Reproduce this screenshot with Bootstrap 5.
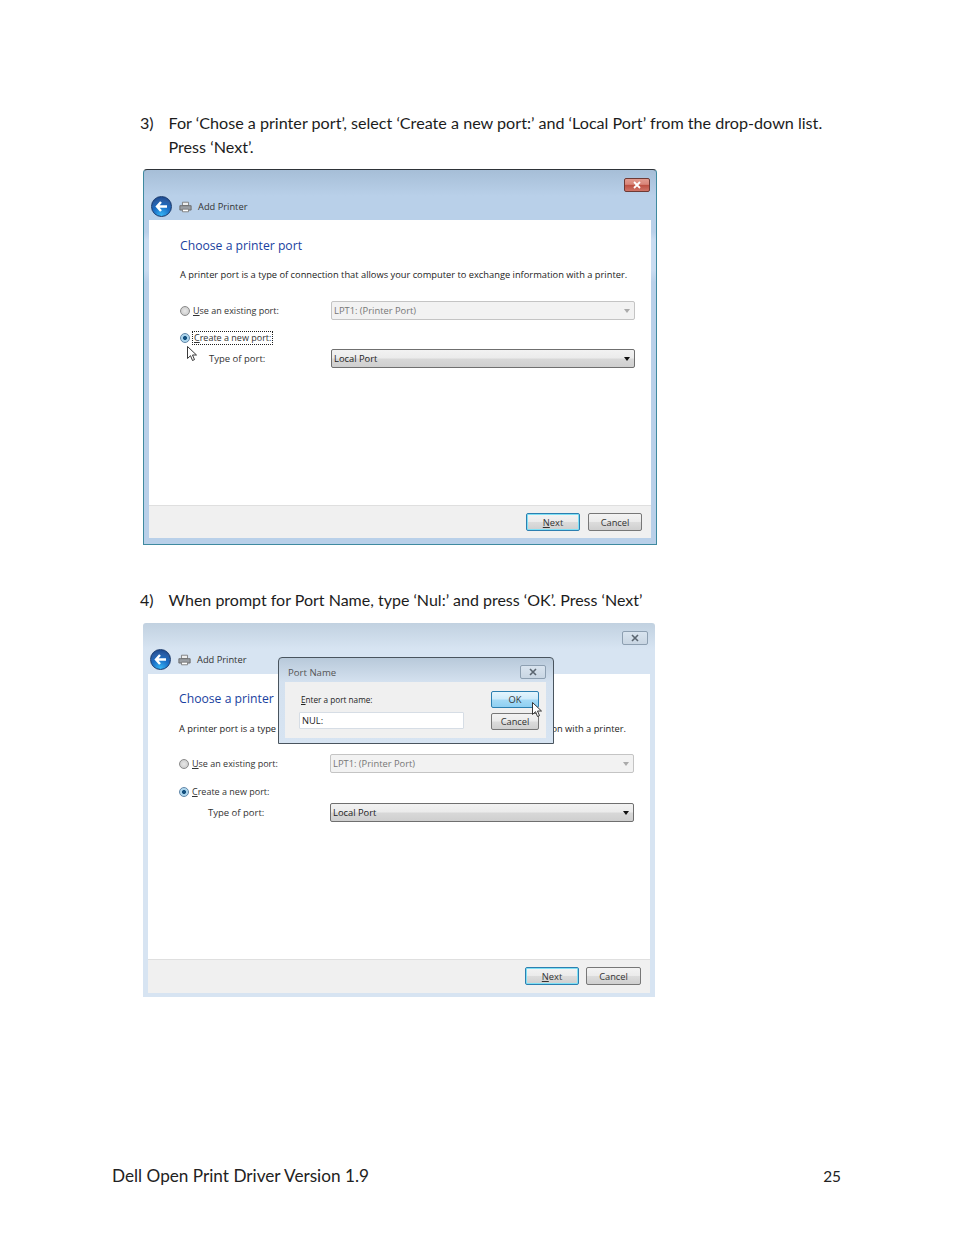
<!DOCTYPE html>
<html lang="en">
<head>
<meta charset="utf-8">
<title>Dell Open Print Driver</title>
<link href="https://cdn.jsdelivr.net/npm/bootstrap@5.3.0/dist/css/bootstrap.min.css" rel="stylesheet">
<style>
html,body{margin:0;background:#fff}
.docpage{width:954px;height:1235px;padding:111px 113px 47px 0;font-family:Lato,"Liberation Sans",sans-serif;font-size:16.15px;line-height:24px;color:#1c1c1c}
.step{margin-left:140px}
.stepb{margin-top:43px;font-size:16px}
.stepnum{width:28.5px;flex:none}
.wshot{position:relative;margin-left:143px;width:514px;height:376px;margin-top:10px;padding:0 5px 6px;background:linear-gradient(180deg,#a6bed7 0,#b9d0e9 26px,#b9d0e9 62px,#c9dcf1 70px,#c9dcf1 100px,#b9d0e9 112px);border:1px solid #3f8aa0;border-top:1px solid #2e3338;border-radius:4px 4px 0 0;font-family:"Open Sans","Liberation Sans",sans-serif;font-size:9.3px;line-height:16px;color:#222}
.wshot.faded{width:512px;height:374px;padding:0 5px 4px;margin-left:143px;background:linear-gradient(180deg,#c1d1e0 0,#d7e4f2 26px);border:0;margin-top:11px;border-radius:3px 3px 0 0}
.tbar{height:50px;position:relative}
.faded .tbar{height:51px}
.xbtn{position:absolute;display:flex;align-items:center;justify-content:center;width:26px;height:14px;border-radius:2px}
.xred{right:1px;top:8px;background:linear-gradient(180deg,#e29a8e 0,#d98679 45%,#bd4f41 50%,#cf7468 100%);border:1px solid #6e3a35}
.xplain{right:2px;top:8px;background:linear-gradient(180deg,#d9e4ef,#c9d6e3);border:1px solid #8d9fb1}
.backb{width:21px;height:21px;border-radius:50%;background:radial-gradient(circle at 50% 95%,#35b4f5 0,#1a6cc4 45%,#2a5ea6 70%,#123f86 100%);border:1px solid #17386c;margin-left:2px;flex:none}
.tbrow{position:absolute;left:0;top:26px;display:flex;align-items:center;font-size:9.3px;color:#333}
.tbrow .pico{margin-left:7px}
.tbrow .ttxt{margin-left:6px}
.pane{background:#fff;height:285px;padding:16px 0 0 31px}
.faded .pane{padding-top:15px}
.phead{font-size:12.2px;line-height:20px;color:#1a3fa0}
.pdesc{margin-top:11px;white-space:nowrap}
.faded .pdesc{margin-top:12px;width:447px}
.frow{display:flex;align-items:center;font-size:9px}
.r1{margin-top:18px;height:19px}
.faded .r1{margin-top:17px}
.r2{margin-top:9px;height:18px}
.faded .r2{margin-top:10px}
.r3{margin-top:2px;height:19px}
.flabel{width:151px;flex:none;display:flex;align-items:center;gap:3px;white-space:nowrap;color:#333}
.r3 .flabel{padding-left:29px;font-size:9.5px}
.rdot{width:10px;height:10px;border-radius:50%;flex:none;border:1px solid #8a8a8a;background:radial-gradient(circle,#e8e8e8 0,#c4c4c4 100%)}
.rdot.on{border-color:#5f86a8;background:radial-gradient(circle,#14507f 0,#14507f 32%,#a8d4ee 40%,#bfdcec 100%)}
.focusbox{outline:1px dotted #222;padding:0 1px;line-height:12px}
.wsel{width:304px;height:19px;display:flex;align-items:center;justify-content:space-between;padding:0 4px 0 2px;border-radius:2px;font-size:9.35px}
.wsel.off{background:#f2f2f2;border:1px solid #c4c4c4;color:#777}
.wsel.act{background:linear-gradient(180deg,#f2f2f2 0,#ebebeb 48%,#d8d8d8 52%,#cfcfcf 100%);border:1px solid #6f6f6f;color:#222}
.caret{width:0;height:0;border-left:3.5px solid transparent;border-right:3.5px solid transparent;border-top:4px solid #111}
.off .caret{border-top-color:#aaa}
.pfoot{height:33px;background:#f0f0f0;border-top:1px solid #dfdfdf;padding:7px 9px 0 0;gap:8px}
.faded .pfoot{height:34px;gap:7px}
.wbtn{width:54px;height:18px;padding:0;border-radius:2px;font-size:9.3px;line-height:15px;color:#333;background:linear-gradient(180deg,#f3f3f3 0,#ebebeb 48%,#dcdcdc 52%,#cfcfcf 100%);border:1px solid #777}
.faded .pfoot .wbtn:last-child{width:55px}
.wbtn.dflt{border:1px solid #2c7fb0;box-shadow:inset 0 0 0 1px #7fe0f5}
.portdlg{position:absolute;left:135px;top:34px;width:276px;height:87px;padding:24px 7px 5px 6px;background:linear-gradient(180deg,#b8c9da 0,#d4e1ef 24px,#d7e4f2 100%);border:1px solid #49545e;border-radius:4px 4px 0 0}
.portdlg .xbtn{right:7px;top:7px}
.dlgtitle{position:absolute;left:9px;top:7px;color:#555;font-size:9.6px}
.dlgin{background:#f0f0f0;height:56px;padding:9px 7px 0 16px;justify-content:space-between}
.dlglab{font-size:8.2px;white-space:nowrap;padding-top:1px}
.dlginput{width:165px;height:17px;margin:4px 0 0 -2px;padding:0 2px;font-size:9.3px;line-height:15px;border:1px solid #d6dde5;border-radius:1px;color:#222;background:#fff}
.dlgbtns{display:flex;flex-direction:column;gap:5px}
.dlgbtns .wbtn{width:48px;height:17px;line-height:13px}
.okb{background:linear-gradient(180deg,#e4f5fd 0,#cdebfb 48%,#a5daf6 52%,#8fd0f2 100%);border:1px solid #2c7fb0}
.okb:hover{background:linear-gradient(180deg,#e4f5fd 0,#cdebfb 48%,#a5daf6 52%,#8fd0f2 100%)}
.ptr{position:absolute;width:11px;height:16px}
.ptr1{left:43px;top:176px}
.ptr2{left:389px;top:79px}
.dfoot{margin:auto 0 0 112px;font-size:17.2px;line-height:24px;color:#222}
.dfoot .pgno{font-size:15.4px}
</style>
</head>
<body>
<div class="docpage d-flex flex-column">
  <div class="step d-flex">
    <div class="stepnum">3)</div>
    <div>For ‘Chose a printer port’, select ‘Create a new port:’ and ‘Local Port’ from the drop-down list.<br>Press ‘Next’.</div>
  </div>
  <div class="wshot">
    <div class="tbar">
      <div class="xbtn xred"><svg width="10" height="8" viewBox="0 0 10 8"><path d="M2 1l6 6M8 1L2 7" stroke="#fff" stroke-width="1.8" fill="none"/></svg></div>
      <div class="tbrow">
        <div class="backb d-flex align-items-center justify-content-center"><svg width="13" height="11" viewBox="0 0 13 11"><path d="M6 1L2 5.500l4 4.500M2.500 5.500H12" stroke="#fff" stroke-width="2.400" fill="none"/></svg></div>
        <svg class="pico" width="13" height="12" viewBox="0 0 15 13"><path d="M4 1h7v4H4z" fill="#eee" stroke="#777"/><path d="M1 5h13v5H1z" fill="#9a9ea3" stroke="#666"/><path d="M4 9h7v3H4z" fill="#fff" stroke="#777"/></svg>
        <span class="ttxt">Add Printer</span>
      </div>
    </div>
    <div class="pane">
      <div class="phead">Choose a printer port</div>
      <div class="pdesc">A printer port is a type of connection that allows your computer to exchange information with a printer.</div>
      <div class="frow r1"><div class="flabel"><span class="rdot"></span><span><u>U</u>se an existing port:</span></div><div class="wsel off"><span>LPT1: (Printer Port)</span><span class="caret"></span></div></div>
      <div class="frow r2"><div class="flabel"><span class="rdot on"></span><span class="focusbox"><u>C</u>reate a new port:</span></div></div>
      <div class="frow r3"><div class="flabel">Type of port:</div><div class="wsel act"><span>Local Port</span><span class="caret"></span></div></div>
    </div>
    <div class="pfoot d-flex justify-content-end">
      <button class="btn wbtn dflt" type="button"><u>N</u>ext</button>
      <button class="btn wbtn" type="button">Cancel</button>
    </div>
    <svg class="ptr ptr1" viewBox="0 0 11 16"><path d="M.5.5v12l3-2.800 2 4.800 2-.9-2-4.600h4z" fill="#fff" stroke="#222" stroke-width=".9"/></svg>
  </div>

  <div class="step stepb d-flex">
    <div class="stepnum">4)</div>
    <div>When prompt for Port Name, type ‘Nul:’ and press ‘OK’. Press ‘Next’</div>
  </div>
  <div class="wshot faded">
    <div class="tbar">
      <div class="xbtn xplain"><svg width="10" height="8" viewBox="0 0 10 8"><path d="M2 1l6 6M8 1L2 7" stroke="#5a6570" stroke-width="1.6" fill="none"/></svg></div>
      <div class="tbrow">
        <div class="backb d-flex align-items-center justify-content-center"><svg width="13" height="11" viewBox="0 0 13 11"><path d="M6 1L2 5.500l4 4.500M2.500 5.500H12" stroke="#fff" stroke-width="2.400" fill="none"/></svg></div>
        <svg class="pico" width="13" height="12" viewBox="0 0 15 13"><path d="M4 1h7v4H4z" fill="#eee" stroke="#777"/><path d="M1 5h13v5H1z" fill="#9a9ea3" stroke="#666"/><path d="M4 9h7v3H4z" fill="#fff" stroke="#777"/></svg>
        <span class="ttxt">Add Printer</span>
      </div>
    </div>
    <div class="pane">
      <div class="phead">Choose a printer</div>
      <div class="pdesc d-flex justify-content-between"><span>A printer port is a type</span><span>on with a printer.</span></div>
      <div class="frow r1"><div class="flabel"><span class="rdot"></span><span><u>U</u>se an existing port:</span></div><div class="wsel off"><span>LPT1: (Printer Port)</span><span class="caret"></span></div></div>
      <div class="frow r2"><div class="flabel"><span class="rdot on"></span><span><u>C</u>reate a new port:</span></div></div>
      <div class="frow r3"><div class="flabel">Type of port:</div><div class="wsel act"><span>Local Port</span><span class="caret"></span></div></div>
    </div>
    <div class="pfoot d-flex justify-content-end">
      <button class="btn wbtn dflt" type="button"><u>N</u>ext</button>
      <button class="btn wbtn" type="button">Cancel</button>
    </div>
    <div class="portdlg">
      <div class="dlgtitle">Port Name</div>
      <div class="xbtn xplain"><svg width="10" height="8" viewBox="0 0 10 8"><path d="M2 1l6 6M8 1L2 7" stroke="#5a6570" stroke-width="1.6" fill="none"/></svg></div>
      <div class="dlgin d-flex">
        <div>
          <div class="dlglab"><u>E</u>nter a port name:</div>
          <input class="form-control dlginput" value="NUL:">
        </div>
        <div class="dlgbtns">
          <button class="btn wbtn okb" type="button">OK</button>
          <button class="btn wbtn" type="button">Cancel</button>
        </div>
      </div>
    </div>
    <svg class="ptr ptr2" viewBox="0 0 11 16"><path d="M.5.5v12l3-2.800 2 4.800 2-.9-2-4.600h4z" fill="#fff" stroke="#222" stroke-width=".9"/></svg>
  </div>

  <div class="dfoot d-flex justify-content-between"><span>Dell Open Print Driver Version 1.9</span><span class="pgno">25</span></div>
</div>
<script src="https://cdn.jsdelivr.net/npm/bootstrap@5.3.0/dist/js/bootstrap.bundle.min.js"></script>
</body>
</html>
